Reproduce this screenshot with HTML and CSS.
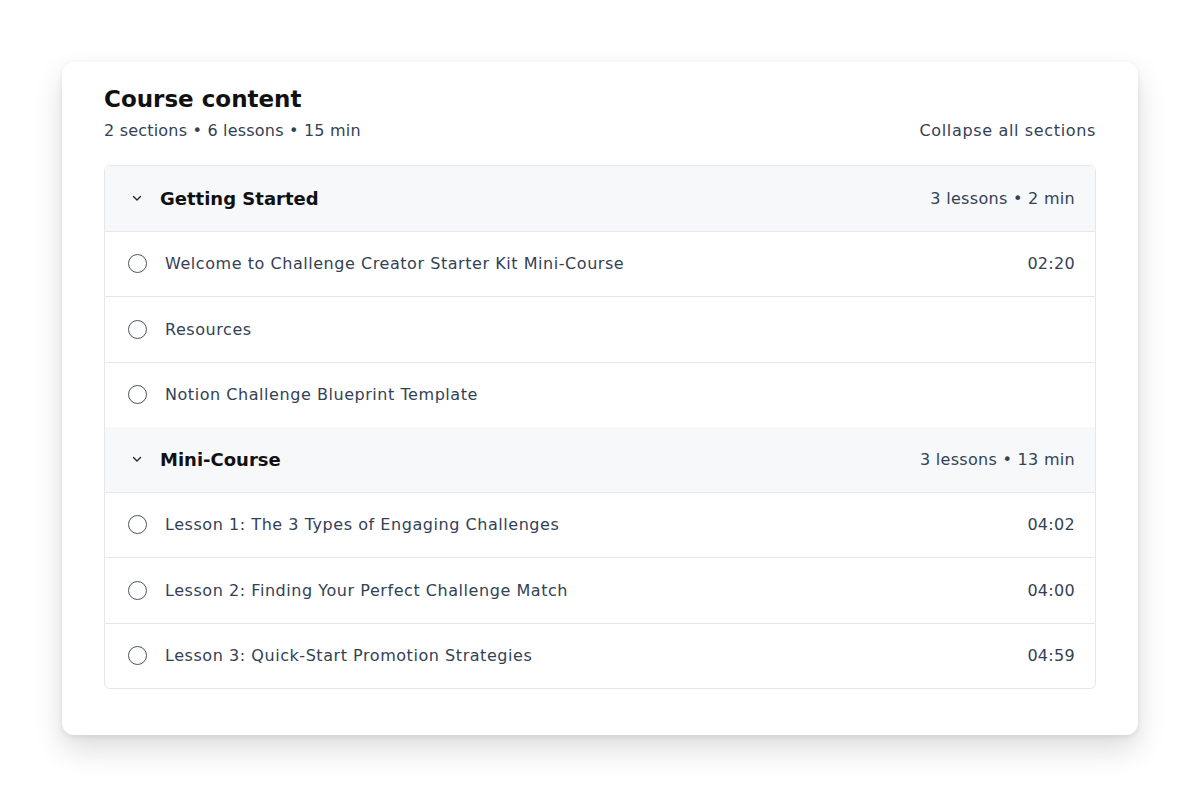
FILE: index.html
```html
<!DOCTYPE html>
<html lang="en">

<head>
    <meta charset="UTF-8">
    <meta name="viewport" content="width=device-width, initial-scale=1.0">
    <title>Course content</title>
    <link rel="stylesheet" href="styles.css">
</head>

<body>
    <main class="card">
        <div class="card-head">
            <div>
                <h1>Course content</h1>
                <p class="summary">2 sections &bull; 6 lessons &bull; 15 min</p>
            </div>
            <button class="collapse-btn">Collapse all sections</button>
        </div>

        <div class="sections">
            <!-- section 1 -->
            <div class="section-head">
                <svg class="chevron" width="12" height="12" viewBox="0 0 12 12"><path d="M2.5 4.5 L6 8 L9.5 4.5" fill="none" stroke="#1f2937" stroke-width="1.4" stroke-linecap="round" stroke-linejoin="round"/></svg>
                <h2>Getting Started</h2>
                <span class="meta">3 lessons &bull; 2 min</span>
            </div>
            <div class="lesson">
                <span class="circle"></span>
                <span class="lesson-title">Welcome to Challenge Creator Starter Kit Mini-Course</span>
                <span class="time">02:20</span>
            </div>
            <div class="lesson">
                <span class="circle"></span>
                <span class="lesson-title">Resources</span>
            </div>
            <div class="lesson">
                <span class="circle"></span>
                <span class="lesson-title">Notion Challenge Blueprint Template</span>
            </div>

            <!-- section 2 -->
            <div class="section-head">
                <svg class="chevron" width="12" height="12" viewBox="0 0 12 12"><path d="M2.5 4.5 L6 8 L9.5 4.5" fill="none" stroke="#1f2937" stroke-width="1.4" stroke-linecap="round" stroke-linejoin="round"/></svg>
                <h2>Mini-Course</h2>
                <span class="meta">3 lessons &bull; 13 min</span>
            </div>
            <div class="lesson">
                <span class="circle"></span>
                <span class="lesson-title">Lesson 1: The 3 Types of Engaging Challenges</span>
                <span class="time">04:02</span>
            </div>
            <div class="lesson">
                <span class="circle"></span>
                <span class="lesson-title">Lesson 2: Finding Your Perfect Challenge Match</span>
                <span class="time">04:00</span>
            </div>
            <div class="lesson">
                <span class="circle"></span>
                <span class="lesson-title">Lesson 3: Quick-Start Promotion Strategies</span>
                <span class="time">04:59</span>
            </div>
        </div>
    </main>
</body>

</html>
```

FILE: styles.css
```css
body {
    font-family: "DejaVu Sans", "Open Sans", sans-serif;
    background-color: #ffffff;
    margin: 0;
    padding: 62px;
    color: #334155;
}

.card {
    background-color: white;
    border-radius: 12px;
    padding: 21px 42px 46px;
    box-shadow: 0 14px 30px rgba(0, 0, 0, 0.14), 0 2px 6px rgba(0, 0, 0, 0.08);
}

.card-head {
    display: flex;
    justify-content: space-between;
    align-items: flex-end;
    margin-bottom: 22px;
}

.card-head h1 {
    margin: 0;
    font-size: 23px;
    font-weight: 700;
    color: #111111;
    line-height: 32px;
}

.summary {
    margin: 4px 0 0;
    font-size: 16px;
    line-height: 24px;
    letter-spacing: 0.2px;
    color: #334155;
}

.collapse-btn {
    background: none;
    border: none;
    padding: 0;
    font-family: inherit;
    font-size: 16px;
    line-height: 24px;
    letter-spacing: 0.65px;
    color: #334155;
    cursor: pointer;
}

.sections {
    border: 1px solid #e5e7eb;
    border-radius: 6px;
    overflow: hidden;
}

.section-head,
.lesson {
    display: flex;
    align-items: center;
    height: 64.5px;
    padding: 0 20px 0 23px;
    border-top: 1px solid #e5e7eb;
}

.section-head {
    background-color: #f7f8fa;
    padding-left: 26px;
    border-top: none;
}

.chevron {
    margin-right: 17px;
}

.section-head h2 {
    flex: 1;
    margin: 0;
    font-size: 18px;
    font-weight: 700;
    color: #111111;
}

.meta,
.time {
    font-size: 16px;
    letter-spacing: 0.3px;
    color: #334155;
}

.circle {
    width: 17px;
    height: 17px;
    border: 1.7px solid #4b5563;
    border-radius: 50%;
    margin-right: 18px;
    flex-shrink: 0;
}

.lesson-title {
    flex: 1;
    font-size: 16px;
    letter-spacing: 0.55px;
    color: #334155;
}
```
